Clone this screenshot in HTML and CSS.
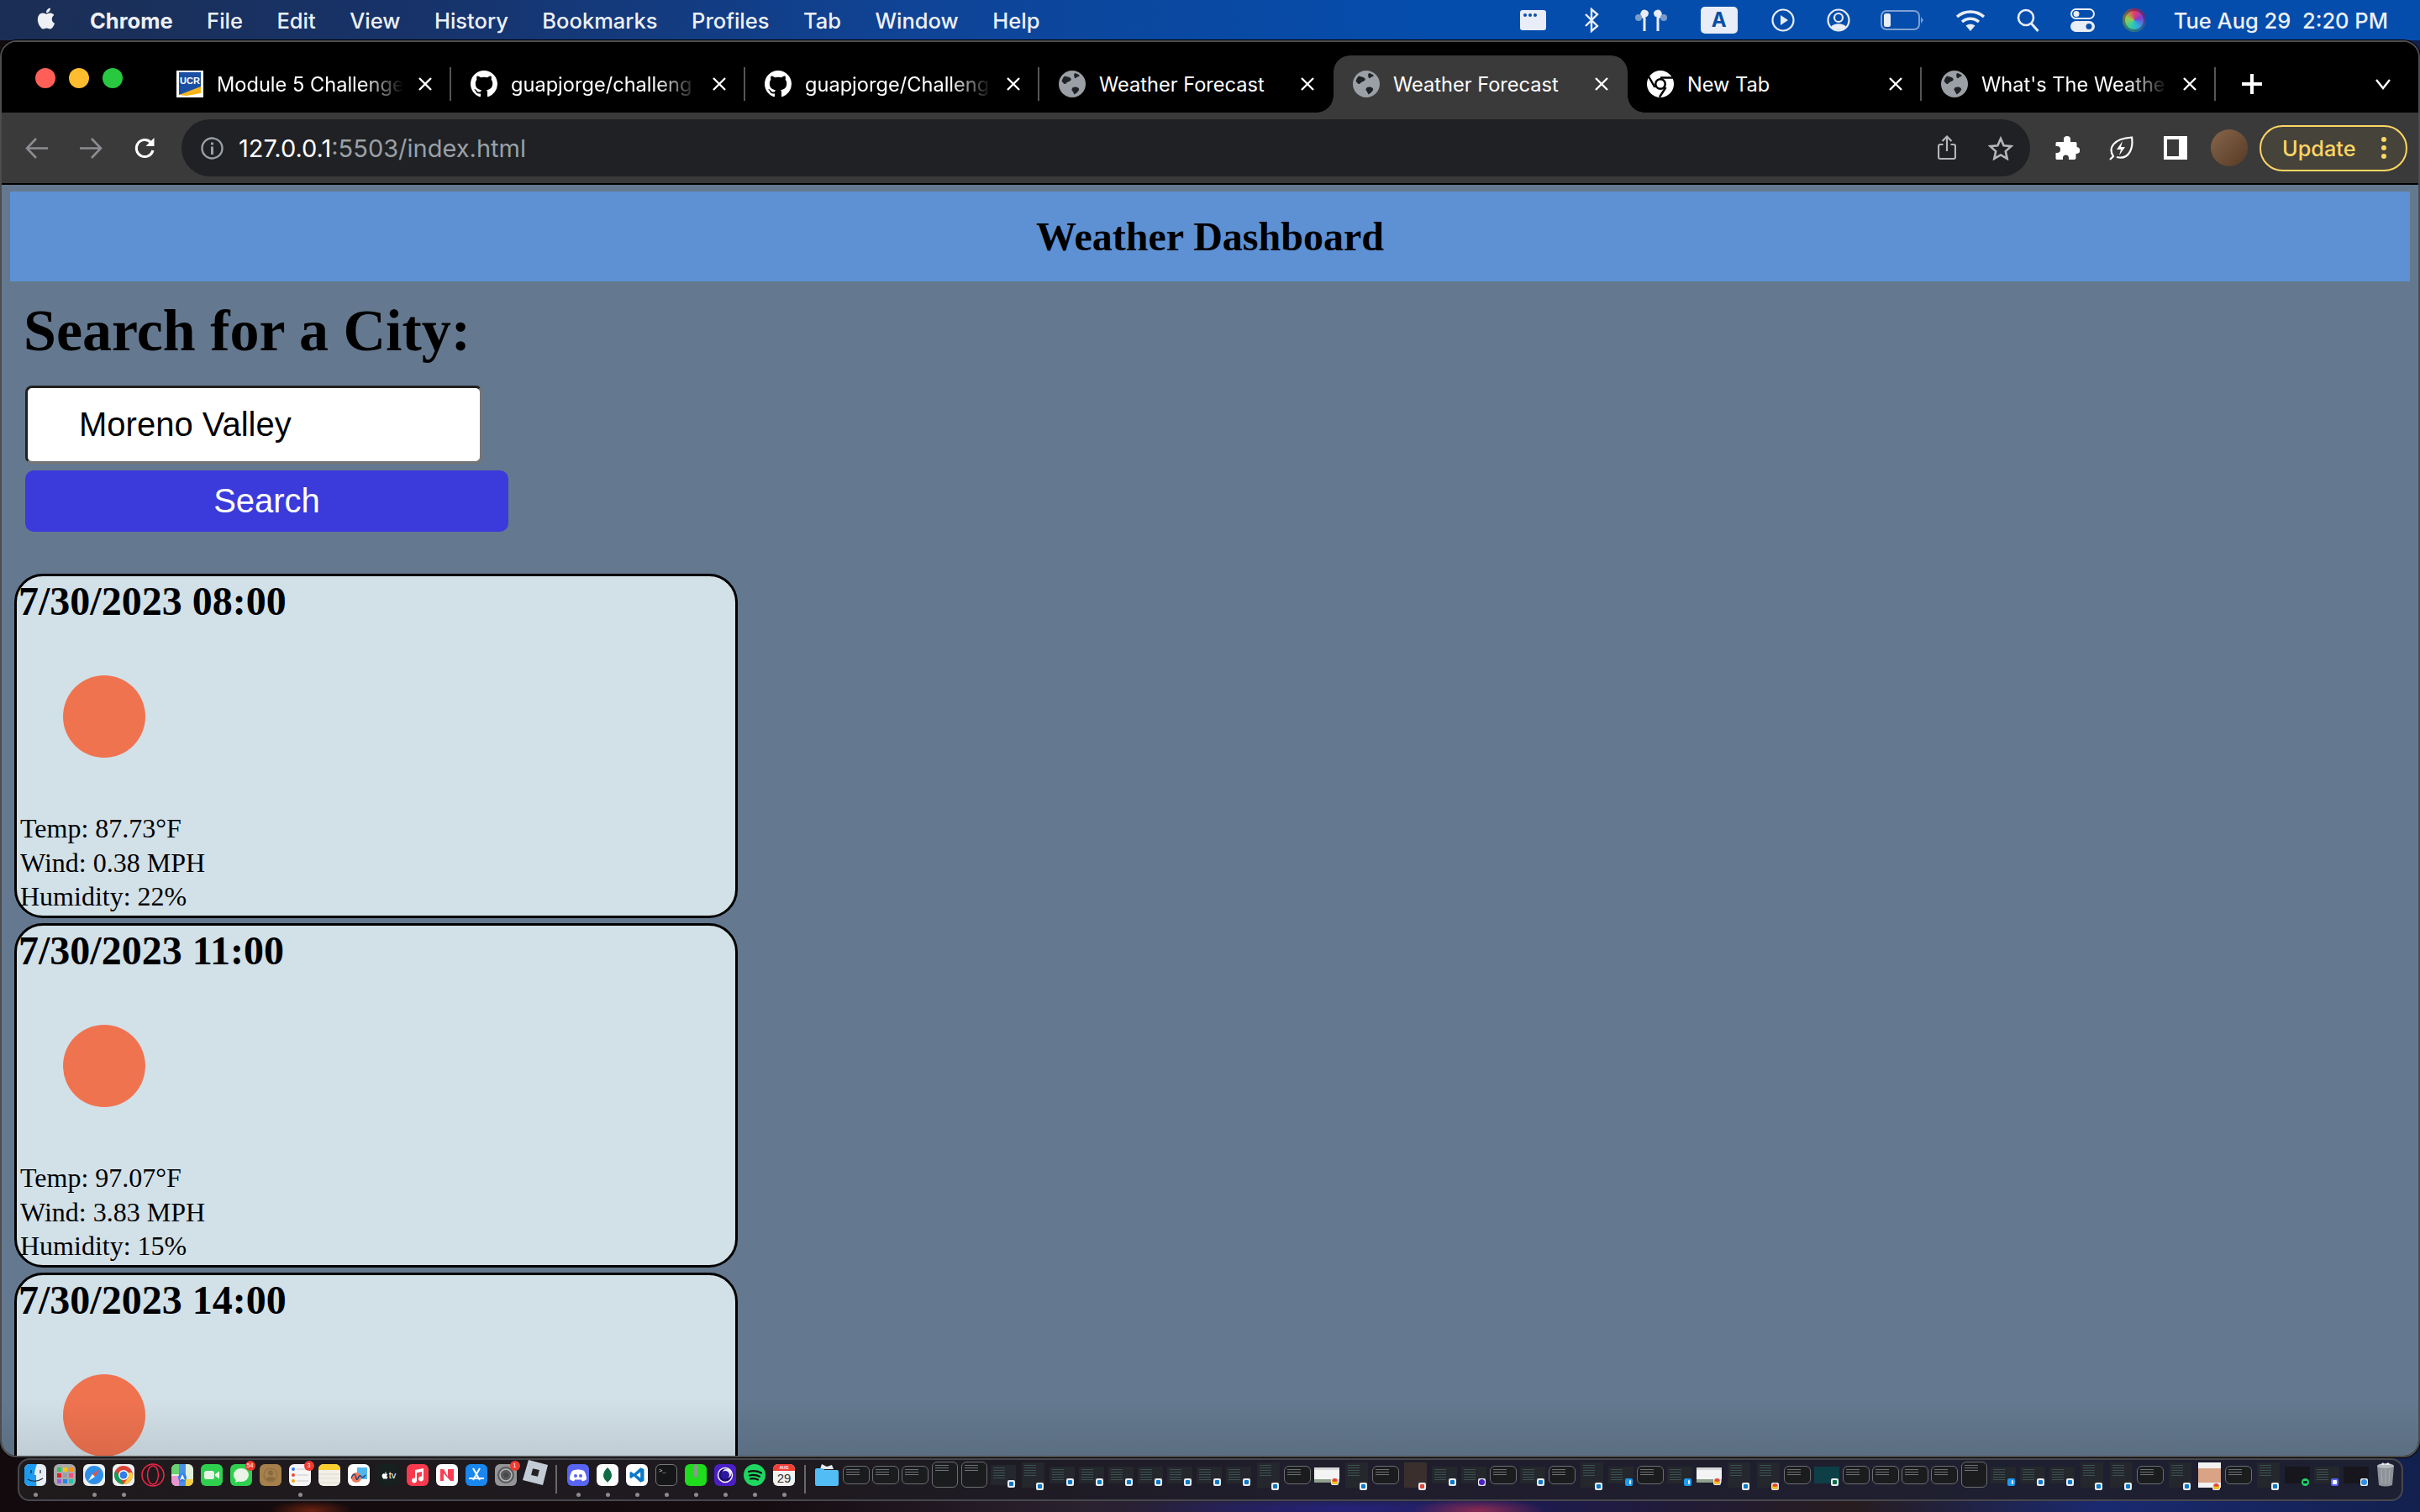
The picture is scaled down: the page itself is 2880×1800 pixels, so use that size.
FILE: index.html
```html
<!DOCTYPE html>
<html lang="en">
<head>
<meta charset="utf-8">
<title>Weather Dashboard</title>
<link rel="stylesheet" href="styles.css">
</head>
<body>
<svg class="defs" width="0" height="0" aria-hidden="true">
  <defs>
    <symbol id="gh" viewBox="0 0 16 16"><path fill="#fff" d="M8 0C3.58 0 0 3.58 0 8c0 3.54 2.29 6.53 5.47 7.59.4.07.55-.17.55-.38 0-.19-.01-.82-.01-1.49-2.01.37-2.53-.49-2.69-.94-.09-.23-.48-.94-.82-1.13-.28-.15-.68-.52-.01-.53.63-.01 1.08.58 1.23.82.72 1.21 1.87.87 2.33.66.07-.52.28-.87.51-1.07-1.78-.2-3.64-.89-3.64-3.95 0-.87.31-1.59.82-2.15-.08-.2-.36-1.02.08-2.12 0 0 .67-.21 2.2.82.64-.18 1.32-.27 2-.27.68 0 1.36.09 2 .27 1.53-1.04 2.2-.82 2.2-.82.44 1.1.16 1.92.08 2.12.51.56.82 1.27.82 2.15 0 3.07-1.87 3.75-3.65 3.95.29.25.54.73.54 1.48 0 1.07-.01 1.93-.01 2.2 0 .21.15.46.55.38A8.013 8.013 0 0016 8c0-4.42-3.58-8-8-8z"/></symbol>
    <symbol id="globe" viewBox="0 0 32 32"><circle cx="16" cy="16" r="16" fill="#9aa0a6"/><path fill="#202124" d="M7 6.500c2.500 1 5 .5 7 2.500s-.5 3.500-3 4.500-2 3-4 2.500-2.500-3-3.500-3.500C4 10.500 5.500 8 7 6.500zM19 3c2.500.5 4.500 1.700 6 3-1 1.500-3 1-4 2.500s-2 .5-2.500-1-.5-3 .5-4.500zM17 20c2-1 4.500-.5 6 .5s1.500 2 .5 3.500-3 3.500-5 4.500c-1-2-1.500-3.500-2.500-4.500s-.5-3 1-4z"/></symbol>
    <symbol id="x" viewBox="0 0 18 18"><path stroke="#fff" stroke-width="2.400" d="M2 2l14 14M16 2L2 16"/></symbol>
    <symbol id="vs" viewBox="0 0 24 24"><path fill="#0a78c9" d="M17 1.500 7.600 10.300 3.600 7.200 1.800 8.100v7.800l1.800.9 4-3.100 9.400 8.800 5.200-2.100V3.600zM17 7.700v8.600l-5.700-4.300z"/></symbol>
  </defs>
</svg>

<header class="menubar">
  <svg class="apple" viewBox="0 0 24 24"><path fill="#eef0f6" d="M18.710 19.500c-.83 1.240-1.710 2.450-3.050 2.470-1.340.03-1.770-.79-3.290-.79-1.530 0-2 .77-3.270.82-1.310.05-2.300-1.320-3.140-2.530C4.250 17 2.940 12.450 4.700 9.390c.87-1.520 2.430-2.480 4.120-2.510 1.280-.02 2.500.87 3.290.87.78 0 2.260-1.070 3.810-.91.65.03 2.470.26 3.640 1.980-.09.06-2.170 1.280-2.150 3.810.03 3.020 2.650 4.030 2.680 4.040-.03.07-.42 1.440-1.380 2.830M13 3.500c.73-.83 1.940-1.460 2.940-1.500.13 1.170-.34 2.350-1.040 3.190-.69.85-1.830 1.510-2.950 1.420-.15-1.150.41-2.350 1.050-3.110z"/></svg>
  <nav class="menus">
    <span class="menu-app">Chrome</span><span>File</span><span>Edit</span><span>View</span><span>History</span><span>Bookmarks</span><span>Profiles</span><span>Tab</span><span>Window</span><span>Help</span>
  </nav>
  <div class="status">
    <svg class="st-win" viewBox="0 0 31 24"><rect width="31" height="24" rx="3" fill="#e8edf7"/><circle cx="6" cy="6" r="2" fill="#0b4ea6"/><circle cx="12" cy="6" r="2" fill="#0b4ea6"/><circle cx="18" cy="6" r="2" fill="#0b4ea6"/></svg>
    <svg class="st-bt m46" viewBox="0 0 17 30"><path fill="none" stroke="#e8edf7" stroke-width="2.400" d="M1 8l14 14-7 6V2l7 6L1 22"/></svg>
    <svg class="st-pods m42" viewBox="0 0 40 30"><path fill="#e8edf7" d="M8 5a5 5 0 0 1 9 1c0 3-1.500 5-3 5h-.5v17h-3V13C8 12 6 9 8 5zM32 5a5 5 0 0 0-9 1c0 3 1.500 5 3 5h.5v17h3V13c2.500-1 4.500-4 2.500-8z"/><circle cx="5" cy="12" r="4" fill="#7a9cc9"/><circle cx="35" cy="12" r="4" fill="#7a9cc9"/></svg>
    <span class="st-a m39">A</span>
    <svg class="st-c m40" viewBox="0 0 28 28"><circle cx="14" cy="14" r="12.500" fill="none" stroke="#e8edf7" stroke-width="2.200"/><path fill="#e8edf7" d="M11 8l9 6-9 6z"/></svg>
    <svg class="st-c m38" viewBox="0 0 28 28"><circle cx="14" cy="14" r="12.500" fill="none" stroke="#e8edf7" stroke-width="2.200"/><circle cx="14" cy="11" r="5" fill="none" stroke="#e8edf7" stroke-width="2.200"/><path fill="#e8edf7" d="M5 22c3-5 15-5 18 0-4 5-14 5-18 0z"/></svg>
    <svg class="st-bat m36" viewBox="0 0 51 24"><rect x="1" y="1" width="45" height="22" rx="6" fill="none" stroke="#7da0d2" stroke-width="2"/><rect x="4" y="4" width="8" height="16" rx="2.500" fill="#e8edf7"/><path fill="#7da0d2" d="M48 8l3 4-3 4z"/></svg>
    <svg class="st-wifi m38" viewBox="0 0 36 26"><g fill="none" stroke="#e8edf7" stroke-width="3.400"><path d="M2 9c9-8 23-8 32 0"/><path d="M8 15c6-5 14-5 20 0"/></g><path fill="#e8edf7" d="M12.500 19.500c3-2.500 8-2.500 11 0L18 26z"/></svg>
    <svg class="st-search m37" viewBox="0 0 27 28"><circle cx="11" cy="11" r="9" fill="none" stroke="#e8edf7" stroke-width="2.600"/><path stroke="#e8edf7" stroke-width="3" d="M17.500 18l8 9"/></svg>
    <svg class="st-cc m37" viewBox="0 0 29 28"><rect x="1" y="1" width="27" height="11" rx="5.500" fill="none" stroke="#e8edf7" stroke-width="2"/><circle cx="7" cy="6.500" r="3.500" fill="#e8edf7"/><rect y="15" width="29" height="13" rx="6.500" fill="#e8edf7"/><circle cx="22" cy="21.500" r="3.500" fill="#0b4ea6"/></svg>
    <span class="siri m33"></span>
    <span class="clock m33">Tue Aug 29&nbsp;&nbsp;2:20 PM</span>
  </div>
</header>

<main class="window">
  <div class="tabstrip">
    <div class="lights"><i class="l-red"></i><i class="l-yel"></i><i class="l-grn"></i></div>
    <div class="tab">
      <svg class="fav" viewBox="0 0 32 32"><rect width="32" height="32" fill="#fff"/><path fill="#1a4fa3" d="M3 2h26v21L3 29z"/><path fill="#f4b41a" d="M3 29l26-10v8L12 30z"/><text x="16" y="16" class="ucr">UCR</text></svg>
      <span class="title fade">Module 5 Challenge</span>
      <svg class="close"><use href="#x"/></svg><i class="sep"></i>
    </div>
    <div class="tab">
      <svg class="fav"><use href="#gh"/></svg>
      <span class="title fade">guapjorge/challeng</span>
      <svg class="close"><use href="#x"/></svg><i class="sep"></i>
    </div>
    <div class="tab">
      <svg class="fav"><use href="#gh"/></svg>
      <span class="title fade">guapjorge/Challeng</span>
      <svg class="close"><use href="#x"/></svg><i class="sep"></i>
    </div>
    <div class="tab">
      <svg class="fav"><use href="#globe"/></svg>
      <span class="title">Weather Forecast</span>
      <svg class="close"><use href="#x"/></svg><i class="sep off"></i>
    </div>
    <div class="tab active">
      <svg class="fav"><use href="#globe"/></svg>
      <span class="title">Weather Forecast</span>
      <svg class="close"><use href="#x"/></svg><i class="sep off"></i>
    </div>
    <div class="tab">
      <svg class="fav" viewBox="0 0 32 32"><circle cx="16" cy="16" r="16" fill="#fff"/><circle cx="16" cy="16" r="7" fill="#000"/><circle cx="16" cy="16" r="4.500" fill="#fff"/><path stroke="#000" stroke-width="2.500" d="M16 8.500h15M9.500 20 2 7M22.500 20 15 31.500"/></svg>
      <span class="title">New Tab</span>
      <svg class="close"><use href="#x"/></svg><i class="sep"></i>
    </div>
    <div class="tab">
      <svg class="fav"><use href="#globe"/></svg>
      <span class="title fade">What's The Weathe</span>
      <svg class="close"><use href="#x"/></svg><i class="sep"></i>
    </div>
    <svg class="plus" viewBox="0 0 24 24"><path stroke="#fff" stroke-width="4" d="M12 0v24M0 12h24"/></svg>
    <svg class="chev" viewBox="0 0 20 14"><path fill="none" stroke="#fff" stroke-width="2.400" d="M2 2l8 10 8-10"/></svg>
  </div>

  <div class="toolbar">
    <svg class="nav back" viewBox="0 0 27 27"><path fill="none" stroke="#8b8d90" stroke-width="2.600" d="M27 13.500H3M13 2 2 13.500 13 25"/></svg>
    <svg class="nav fwd" viewBox="0 0 27 27"><path fill="none" stroke="#8b8d90" stroke-width="2.600" d="M0 13.500h24M14 2l11 11.500L14 25"/></svg>
    <svg class="nav reload" viewBox="0 0 27 27"><path fill="none" stroke="#fff" stroke-width="3" d="M23 16a10 10 0 1 1-2.500-9.500"/><path fill="#fff" d="M24.500 1v10h-10z"/></svg>
    <div class="omni">
      <svg class="info" viewBox="0 0 27 27"><circle cx="13.500" cy="13.500" r="12" fill="none" stroke="#9aa0a6" stroke-width="2.400"/><path fill="#9aa0a6" d="M12 11.500h3V21h-3zM12 6.500h3v3h-3z"/></svg>
      <span class="url"><span class="url-host">127.0.0.1</span>:5503/index.html</span>
      <svg class="share" viewBox="0 0 22 30"><path fill="none" stroke="#b4b6b8" stroke-width="2.200" d="M6.500 11H3a2 2 0 0 0-2 2v13a2 2 0 0 0 2 2h16a2 2 0 0 0 2-2V13a2 2 0 0 0-2-2h-3.500M11 19V2M5.500 7 11 1.500 16.500 7"/></svg>
      <svg class="star" viewBox="0 0 30 29"><path fill="none" stroke="#b4b6b8" stroke-width="2.600" d="M15 3l3.600 8.200 8.900.9-6.700 6 1.900 8.800-7.700-4.500-7.700 4.500 1.900-8.800-6.700-6 8.900-.9z"/></svg>
    </div>
    <svg class="puzzle" viewBox="0 0 29 29"><path fill="#fff" d="M10 3.500a4 3.500 0 0 1 8 0V7h6a1.500 1.500 0 0 1 1.500 1.500V13H25a4 3.500 0 0 1 0 8h-.5v5a2 2 0 0 1-2 2H16v-2a3.500 3.500 0 0 0-7 0v2H2a1.500 1.500 0 0 1-1.500-1.500V20H2a4 4 0 0 0 0-8H.5V8.500A1.500 1.500 0 0 1 2 7h8z"/></svg>
    <svg class="leaf" viewBox="0 0 29 29"><path fill="none" stroke="#fff" stroke-width="2.200" d="M1 28l4-4C-1 15 4 3 27 1.500 29 14 24 29 9 25"/><path fill="#fff" d="M16 6l-7 10h5l-2 7 7-10h-5z"/></svg>
    <svg class="panel" viewBox="0 0 28 28"><path fill="#fff" fill-rule="evenodd" d="M0 0h28v28H0zM4 4v20h14V4z"/></svg>
    <span class="avatar"></span>
    <div class="update"><span>Update</span><svg class="dots" viewBox="0 0 6 26"><circle cx="3" cy="3" r="3"/><circle cx="3" cy="13" r="3"/><circle cx="3" cy="23" r="3"/></svg></div>
  </div>

  <div class="page">
    <div class="site-head"><h1 class="site-title">Weather Dashboard</h1></div>
    <section class="search">
      <h2 class="search-title">Search for a City:</h2>
      <input class="city" type="text" value="Moreno Valley">
      <button class="go" type="button">Search</button>
    </section>
    <section class="forecast">
      <article class="card">
        <h3 class="when">7/30/2023 08:00</h3>
        <div class="icon"><span class="sun"></span></div>
        <p>Temp: 87.73°F</p><p>Wind: 0.38 MPH</p><p>Humidity: 22%</p>
      </article>
      <article class="card">
        <h3 class="when">7/30/2023 11:00</h3>
        <div class="icon"><span class="sun"></span></div>
        <p>Temp: 97.07°F</p><p>Wind: 3.83 MPH</p><p>Humidity: 15%</p>
      </article>
      <article class="card">
        <h3 class="when">7/30/2023 14:00</h3>
        <div class="icon"><span class="sun"></span></div>
      </article>
    </section>
  </div>
</main>

<footer class="dock">
  <div class="slot"><svg class="app" viewBox="0 0 26 26"><rect width="26" height="26" rx="6" fill="#e6edf5"/><path fill="#1d9bf0" d="M6 0h9c-2 5-3 9-3 13h2c0 3 0 8 .5 13H6a6 6 0 0 1-6-6V6a6 6 0 0 1 6-6z"/><path fill="none" stroke="#1b2a3a" stroke-width="1.200" d="M4 18c5 3 12 3 18-1M8 7v4M19 7v4"/></svg><i class="dot"></i></div>
  <div class="slot"><svg class="app" viewBox="0 0 26 26"><rect width="26" height="26" rx="6" fill="#a9a9ab"/><g><rect x="4" y="4" width="5" height="5" fill="#35c05a"/><rect x="11" y="4" width="5" height="5" fill="#f5c518"/><rect x="18" y="4" width="5" height="5" fill="#ff9500"/><rect x="4" y="11" width="5" height="5" fill="#e0202f"/><rect x="11" y="11" width="5" height="5" fill="#9a9da3"/><rect x="18" y="11" width="5" height="5" fill="#ff4f79"/><rect x="4" y="18" width="5" height="5" fill="#9b5de5"/><rect x="11" y="18" width="5" height="5" fill="#1e88f0"/><rect x="18" y="18" width="5" height="5" fill="#22c7a9"/></g></svg></div>
  <div class="slot"><svg class="app" viewBox="0 0 26 26"><rect width="26" height="26" rx="6" fill="#eef1f4"/><circle cx="13" cy="13" r="11" fill="#2f8fe8"/><path fill="#ef4f3c" d="M20 6l-9 6 3 3z"/><path fill="#fff" d="M6 20l8-5-3-3z"/></svg><i class="dot"></i></div>
  <div class="slot"><svg class="app" viewBox="0 0 26 26"><rect width="26" height="26" rx="6" fill="#eef1f4"/><circle cx="13" cy="13" r="11" fill="#db4437"/><path fill="#0f9d58" d="M13 24A11 11 0 0 1 3.500 7.500L9 17z"/><path fill="#ffcd40" d="M24 13a11 11 0 0 1-11 11l5.500-8-.5-6h5z"/><circle cx="13" cy="13" r="6" fill="#fff"/><circle cx="13" cy="13" r="4.500" fill="#2f7fe8"/></svg><i class="dot"></i></div>
  <div class="slot"><svg class="app wide" viewBox="0 0 28 28"><g fill="none" stroke="#f0264a" stroke-width="1.500"><circle cx="14" cy="14" r="13"/><ellipse cx="14" cy="14" rx="6.500" ry="11"/></g></svg></div>
  <div class="slot"><svg class="app" viewBox="0 0 26 26"><rect width="26" height="26" rx="6" fill="#dff0d8"/><path fill="#67d26f" d="M0 6a6 6 0 0 1 6-6h3v12H0z"/><path fill="#e896d0" d="M0 14h9v12H6a6 6 0 0 1-6-6z"/><path fill="#f5cf45" d="M17 18h9v2a6 6 0 0 1-6 6h-3z"/><rect x="9" y="0" width="8" height="26" fill="#4a90e8"/><circle cx="13" cy="16" r="5" fill="#2f7fe8"/><path fill="#fff" d="M13 12l3 7-3-1.500L10 19z"/></svg></div>
  <div class="slot"><svg class="app" viewBox="0 0 26 26"><rect width="26" height="26" rx="6" fill="#2fd04f"/><rect x="4" y="8" width="12" height="10" rx="2.500" fill="#e8f5e6"/><path fill="#e8f5e6" d="M17 12l5-3.500v9L17 14z"/></svg></div>
  <div class="slot"><svg class="app" viewBox="0 0 26 26"><rect width="26" height="26" rx="6" fill="#2fcf50"/><ellipse cx="13" cy="13" rx="9" ry="8" fill="#e8f5e6"/><path fill="#e8f5e6" d="M7 18l-1 4 5-2z"/></svg><span class="pip">54</span></div>
  <div class="slot"><svg class="app" viewBox="0 0 26 26"><rect width="26" height="26" rx="6" fill="#a57f4c"/><circle cx="13" cy="13" r="8" fill="none" stroke="#8a6a3e" stroke-width="1"/><circle cx="13" cy="10.500" r="3" fill="#8a6a3e"/><path fill="#8a6a3e" d="M7 18c2-4 10-4 12 0-3 2.500-9 2.500-12 0z"/></svg></div>
  <div class="slot"><svg class="app" viewBox="0 0 26 26"><rect width="26" height="26" rx="6" fill="#f5f5f5"/><circle cx="5" cy="6" r="2" fill="#3478f6"/><circle cx="5" cy="13" r="2" fill="#f0483e"/><circle cx="5" cy="20" r="2" fill="#f5a11c"/><path stroke="#c8c8c8" stroke-width="1" d="M9 6h14M9 13h14M9 20h14"/></svg><span class="pip">3</span><i class="dot"></i></div>
  <div class="slot"><svg class="app" viewBox="0 0 26 26"><rect width="26" height="26" rx="6" fill="#f1efe6"/><path fill="#fdd02f" d="M0 6a6 6 0 0 1 6-6h14a6 6 0 0 1 6 6v1H0z"/><path stroke="#d8d6cd" stroke-width=".7" d="M0 12h26M0 17h26M0 22h26"/></svg></div>
  <div class="slot"><svg class="app" viewBox="0 0 26 26"><rect width="26" height="26" rx="6" fill="#fff"/><rect x="11" y="4" width="12" height="14" fill="#52b6ee"/><circle cx="10" cy="16" r="6" fill="#f0785a"/><path fill="none" stroke="#16477f" stroke-width="1.300" d="M4 17c3-8 5-5 6 0s3-5 5-3 3 3 6-1"/></svg></div>
  <div class="slot"><div class="app tv"><svg viewBox="0 0 24 24"><path fill="#fff" d="M18.710 19.500c-.83 1.240-1.710 2.450-3.050 2.470-1.340.03-1.770-.79-3.290-.79-1.530 0-2 .77-3.270.82-1.310.05-2.300-1.320-3.140-2.530C4.250 17 2.940 12.450 4.700 9.390c.87-1.520 2.430-2.480 4.120-2.510 1.280-.02 2.500.87 3.290.87.78 0 2.260-1.070 3.810-.91.65.03 2.470.26 3.640 1.980-.09.06-2.170 1.280-2.150 3.810.03 3.020 2.650 4.030 2.680 4.040-.03.07-.42 1.440-1.380 2.830M13 3.500c.73-.83 1.940-1.460 2.940-1.500.13 1.170-.34 2.350-1.040 3.190-.69.85-1.830 1.510-2.950 1.420-.15-1.150.41-2.350 1.050-3.110z"/></svg>tv</div></div>
  <div class="slot"><svg class="app" viewBox="0 0 26 26"><rect width="26" height="26" rx="6" fill="#f93a4e"/><path fill="#fff" d="M10 7l10-2v12.500a3 3 0 1 1-2-2.800V9l-6 1.200v9.300a3 3 0 1 1-2-2.800z"/></svg></div>
  <div class="slot"><svg class="app" viewBox="0 0 26 26"><rect width="26" height="26" rx="6" fill="#fff"/><path fill="#fa3e54" d="M5 6h4l5 9V6h7v14h-4L9 11v9H5z"/></svg></div>
  <div class="slot"><svg class="app" viewBox="0 0 26 26"><rect width="26" height="26" rx="6" fill="#1a87ee"/><path fill="none" stroke="#fff" stroke-width="2" d="M9 5l8 14M17 5 9 19M4 17h18"/></svg></div>
  <div class="slot"><svg class="app" viewBox="0 0 26 26"><rect width="26" height="26" rx="6" fill="#949596"/><circle cx="13" cy="13" r="10" fill="#5a5b5c"/><circle cx="13" cy="13" r="7" fill="none" stroke="#b8b9ba" stroke-width="1.600"/><circle cx="13" cy="13" r="3" fill="#48494a"/></svg><span class="pip">1</span></div>
  <div class="slot"><svg class="app roblox" viewBox="0 0 30 30"><path fill="#c3ccd6" d="M7 0l23 6-6 24L0 24z"/><rect x="11" y="11" width="8" height="8" fill="#222" transform="rotate(14 15 15)"/></svg></div>
  <i class="dock-sep"></i>
  <div class="slot"><svg class="app" viewBox="0 0 26 26"><rect width="26" height="26" rx="6" fill="#5865f2"/><path fill="#fff" d="M6 8c4-2 10-2 14 0 2 3 3 6 3 10-2 1.500-3.500 2-5 2.500l-1-2h-8l-1 2c-1.500-.5-3-1-5-2.500 0-4 1-7 3-10z"/><circle cx="10" cy="14" r="2" fill="#5865f2"/><circle cx="16" cy="14" r="2" fill="#5865f2"/></svg><i class="dot"></i></div>
  <div class="slot"><svg class="app" viewBox="0 0 26 26"><rect width="26" height="26" rx="6" fill="#fff"/><path fill="#0f6b46" d="M13 4c3 3 5 6 5 9.500S15 20 13.500 21l-.5 2-.5-2C11 20 8 17 8 13.500S10 7 13 4z"/></svg><i class="dot"></i></div>
  <div class="slot"><div class="app vsapp"><svg><use href="#vs"/></svg></div><i class="dot"></i></div>
  <div class="slot"><div class="app term">&gt;_</div><i class="dot"></i></div>
  <div class="slot"><svg class="app" viewBox="0 0 26 26"><rect width="26" height="26" rx="6" fill="#1fdc1f"/><rect x="11" y="0" width="4" height="16" rx="2" fill="#8a9a8a"/></svg><i class="dot"></i></div>
  <div class="slot"><svg class="app" viewBox="0 0 26 26"><rect width="26" height="26" rx="6" fill="#4a1fc4"/><circle cx="13" cy="13" r="8.500" fill="#1c0b72" stroke="#fff" stroke-width="1.400"/><circle cx="15" cy="11" r="5.500" fill="#fff" opacity=".9"/><circle cx="13" cy="13" r="5" fill="#2c18a0"/></svg><i class="dot"></i></div>
  <div class="slot"><svg class="app" viewBox="0 0 26 26"><circle cx="13" cy="13" r="13" fill="#1ed760"/><path fill="none" stroke="#111" stroke-width="2.200" stroke-linecap="round" d="M6 9c5-1.500 10-1 15 1.500M7 13.500c4-1 8-.8 12 1.200M8 17.500c3-.7 6-.5 9 1"/></svg><i class="dot"></i></div>
  <div class="slot"><div class="app cal"><span class="cal-m">AUG</span><span class="cal-d">29</span></div><i class="dot"></i></div>
  <i class="dock-sep"></i>
  <div class="slot"><svg class="app folder" viewBox="0 0 28 26"><path fill="#e4ecf3" d="M8 0l6 3 6-2 2 5H6z"/><path fill="#52bdf4" d="M0 7q0-2 2-2h7l2 2h15q2 0 2 2v15q0 2-2 2H2q-2 0-2-2z"/></svg></div>
  <div class="slot"><i class="th term"></i></div>
  <div class="slot"><i class="th term"></i></div>
  <div class="slot"><i class="th term"></i></div>
  <div class="slot"><i class="th term tall"></i></div>
  <div class="slot"><i class="th term tall"></i></div>
  <div class="slot"><i class="th mid"><span class="bdg vs"></span></i></div>
  <div class="slot"><i class="th tall"><span class="bdg vs"></span></i></div>
  <div class="slot"><i class="th"><span class="bdg vs"></span></i></div>
  <div class="slot"><i class="th"><span class="bdg vs"></span></i></div>
  <div class="slot"><i class="th"><span class="bdg vs"></span></i></div>
  <div class="slot"><i class="th"><span class="bdg vs"></span></i></div>
  <div class="slot"><i class="th"><span class="bdg vs"></span></i></div>
  <div class="slot"><i class="th"><span class="bdg vs"></span></i></div>
  <div class="slot"><i class="th"><span class="bdg vs"></span></i></div>
  <div class="slot"><i class="th tall"><span class="bdg vs"></span></i></div>
  <div class="slot"><i class="th term"></i></div>
  <div class="slot"><i class="th white"><span class="bdg ch"></span></i></div>
  <div class="slot"><i class="th tall"><span class="bdg vs"></span></i></div>
  <div class="slot"><i class="th term"></i></div>
  <div class="slot"><i class="th tall brown"><span class="bdg cl"></span></i></div>
  <div class="slot"><i class="th"><span class="bdg vs"></span></i></div>
  <div class="slot"><i class="th"><span class="bdg pu"></span></i></div>
  <div class="slot"><i class="th term"></i></div>
  <div class="slot"><i class="th"><span class="bdg vs"></span></i></div>
  <div class="slot"><i class="th term"></i></div>
  <div class="slot"><i class="th tall"><span class="bdg vs"></span></i></div>
  <div class="slot"><i class="th"><span class="bdg fi"></span></i></div>
  <div class="slot"><i class="th term"></i></div>
  <div class="slot"><i class="th"><span class="bdg fi"></span></i></div>
  <div class="slot"><i class="th white"><span class="bdg ch"></span></i></div>
  <div class="slot"><i class="th tall"><span class="bdg vs"></span></i></div>
  <div class="slot"><i class="th tall"><span class="bdg ch"></span></i></div>
  <div class="slot"><i class="th term"></i></div>
  <div class="slot"><i class="th teal"><span class="bdg mo"></span></i></div>
  <div class="slot"><i class="th term"></i></div>
  <div class="slot"><i class="th term"></i></div>
  <div class="slot"><i class="th term"></i></div>
  <div class="slot"><i class="th term"></i></div>
  <div class="slot"><i class="th term tall"></i></div>
  <div class="slot"><i class="th"><span class="bdg fi"></span></i></div>
  <div class="slot"><i class="th"><span class="bdg vs"></span></i></div>
  <div class="slot"><i class="th"><span class="bdg vs"></span></i></div>
  <div class="slot"><i class="th tall"><span class="bdg vs"></span></i></div>
  <div class="slot"><i class="th tall"><span class="bdg vs"></span></i></div>
  <div class="slot"><i class="th term"></i></div>
  <div class="slot"><i class="th tall"><span class="bdg vs"></span></i></div>
  <div class="slot"><i class="th tall photo"><span class="bdg ch"></span></i></div>
  <div class="slot"><i class="th term"></i></div>
  <div class="slot"><i class="th tall"><span class="bdg vs"></span></i></div>
  <div class="slot"><i class="th dark"><span class="bdg sp"></span></i></div>
  <div class="slot"><i class="th"><span class="bdg di"></span></i></div>
  <div class="slot"><i class="th dark"><span class="bdg sa"></span></i></div>
  <div class="slot"><svg class="trash" viewBox="0 0 22 30"><path fill="#8d9198" d="M1 5h20l-2 23q-8 3-16 0z"/><ellipse cx="11" cy="5" rx="10" ry="3" fill="#b5b8bd"/><path fill="#e8e9ec" d="M5 4l3-3 2 3 4-3 3 3z"/><path stroke="#a9acb2" stroke-width="1" d="M6 9l1 17M11 9v18M16 9l-1 17"/></svg></div>
</footer>
</body>
</html>
```

FILE: styles.css
```css
* { box-sizing: border-box; }

html, body { margin: 0; height: 1800px; overflow: hidden; }

body {
  width: 2880px;
  font-family: "Liberation Serif", "Times New Roman", serif;
  color: #000;
  background:
    radial-gradient(50px 12px at 370px 1798px, #6a2210 0, transparent 100%),
    radial-gradient(80px 14px at 1760px 1798px, #8a2a50 0, transparent 100%),
    radial-gradient(260px 16px at 1600px 1796px, #25237a 0, transparent 100%),
    linear-gradient(90deg, #120a0c 0, #150c10 900px, #2a2230 1300px, #1c1a50 1800px, #271c1e 2200px, #1a2a70 2500px, #12204e 2880px);
}

.defs { position: absolute; }

/* macOS menu bar */
.menubar {
  height: 48px;
  display: flex;
  align-items: center;
  padding: 0 38px 0 40px;
  background: linear-gradient(90deg, #1b2e54 0, #17336a 500px, #0f4497 1100px, #054dac 1700px);
  color: #edf0f7;
  font: 500 25.500px "Inter", "Noto Sans", sans-serif;
}
.apple { width: 30px; height: 34px; margin-top: -4px; }
.menus { display: flex; gap: 40.500px; margin-left: 37px; }
.menu-app { font-weight: 700; }
.status { display: flex; align-items: center; margin-left: auto; }
.st-win { width: 31px; height: 24px; }
.st-bt { width: 17px; height: 30px; }
.st-pods { width: 40px; height: 30px; }
.st-a {
  width: 44px; height: 32px; border-radius: 5px;
  background: #e8edf7; color: #0b4ea6;
  font: 700 24px/32px "Inter", sans-serif; text-align: center;
}
.st-c { width: 28px; height: 28px; }
.st-bat { width: 51px; height: 24px; }
.st-wifi { width: 36px; height: 26px; }
.st-search { width: 27px; height: 28px; }
.st-cc { width: 29px; height: 28px; }
.siri {
  width: 28px; height: 28px; border-radius: 50%;
  background: conic-gradient(#e63a6a, #7b3fd0, #2fa8e0, #38d0a0, #9ec84a, #e63a6a);
  box-shadow: inset 0 0 0 3px rgba(40, 20, 60, .45);
}
.m33 { margin-left: 33px; }
.m36 { margin-left: 36px; }
.m37 { margin-left: 37px; }
.m38 { margin-left: 38px; }
.m39 { margin-left: 39px; }
.m40 { margin-left: 40px; }
.m42 { margin-left: 42px; }
.m46 { margin-left: 46px; }

/* Browser window */
.window {
  height: 1687px;
  border: 2px solid #4d4d4f;
  border-radius: 20px;
  overflow: hidden;
  background: #000;
  box-shadow: 0 0 0 1px #000;
}

.tabstrip {
  height: 84px;
  display: flex;
  align-items: flex-end;
  background: #000;
}
.lights { display: flex; gap: 16px; width: 185px; padding-left: 40px; align-self: flex-start; padding-top: 31px; }
.lights i { width: 24px; height: 24px; border-radius: 50%; }
.l-red { background: #ff5f57; }
.l-yel { background: #febc2e; }
.l-grn { background: #28c840; }

.tab {
  position: relative;
  flex: none;
  width: 350px;
  height: 68px;
  display: flex;
  align-items: center;
  padding-left: 23px;
  color: #fff;
  font: 400 23.600px "Inter", "Noto Sans", sans-serif;
}
.tab.active { background: #3a3a3a; border-radius: 20px 20px 0 0; }
.tab.active::before, .tab.active::after {
  content: "";
  position: absolute;
  bottom: 0;
  width: 20px;
  height: 20px;
}
.tab.active::before { left: -20px; background: radial-gradient(circle at 0 0, #000 19.500px, #3a3a3a 20px); }
.tab.active::after { right: -20px; background: radial-gradient(circle at 100% 0, #000 19.500px, #3a3a3a 20px); }
.fav { flex: none; width: 32px; height: 32px; }
.ucr { font: 700 11px "Liberation Sans", sans-serif; fill: #fff; text-anchor: middle; }
.title { flex: none; width: 222px; margin-left: 16px; white-space: nowrap; }
.fade { -webkit-mask-image: linear-gradient(90deg, #000 78%, transparent); mask-image: linear-gradient(90deg, #000 78%, transparent); }
.close { flex: none; width: 18px; height: 18px; margin-left: 17px; }
.sep { flex: none; width: 2px; height: 40px; margin-left: 20px; background: #555; }
.sep.off { background: transparent; }
.plus { flex: none; width: 24px; height: 24px; margin: 0 0 22px 31px; }
.chev { flex: none; width: 20px; height: 14px; margin: 0 32px 27px auto; }

.toolbar {
  height: 84px;
  display: flex;
  align-items: center;
  background: #3a3a3a;
  padding-left: 28px;
}
.nav { flex: none; width: 27px; height: 27px; }
.fwd { margin-left: 38px; }
.reload { margin-left: 37px; }
.omni {
  flex: none;
  width: 2200px;
  height: 68px;
  margin-left: 30px;
  display: flex;
  align-items: center;
  padding-left: 23px;
  border-radius: 34px;
  background: #202124;
  color: #9aa0a6;
  font: 400 29px "Inter", "Noto Sans", sans-serif;
}
.info { flex: none; width: 27px; height: 27px; }
.url { margin-left: 18px; }
.url-host { color: #fff; }
.share { flex: none; width: 22px; height: 30px; margin-left: auto; }
.star { flex: none; width: 30px; height: 29px; margin: 0 20px 0 38px; }
.puzzle, .leaf, .panel { flex: none; width: 29px; height: 29px; }
.puzzle { margin-left: 30px; }
.leaf { margin-left: 35px; }
.panel { margin-left: 36px; width: 28px; height: 28px; }
.avatar {
  flex: none; width: 44px; height: 44px; margin-left: 28px; border-radius: 50%;
  background: linear-gradient(135deg, #87654a, #553a26);
}
.update {
  flex: none;
  width: 176px;
  height: 55px;
  margin-left: 14px;
  display: flex;
  align-items: center;
  padding-left: 25px;
  border: 2px solid #fdd663;
  border-radius: 28px;
  background: #46433b;
  color: #fdd663;
  font: 500 25.300px "Inter", "Noto Sans", sans-serif;
}
.dots { width: 6px; height: 26px; margin-left: 30px; fill: #fdd663; }

/* The page shown in the browser */
.page {
  position: relative;
  height: 1515px;
  margin-top: 2px;
  padding: 8px 10px 0;
  overflow: hidden;
  background: #64798f;
}
.page::after {
  content: "";
  position: absolute;
  left: 0; right: 0; bottom: 0;
  height: 70px;
  background: linear-gradient(transparent, rgba(0, 0, 0, .09));
}
.site-head {
  height: 107px;
  display: flex;
  align-items: center;
  justify-content: center;
  background: #5e91d4;
}
.site-title { margin: 0; font-size: 48px; font-weight: 700; line-height: 1; }

.search { display: flex; flex-direction: column; align-items: flex-start; padding-left: 18px; }
.search-title { margin: 19px 0 25px -2px; font-size: 70px; font-weight: 700; line-height: 80px; }
.city {
  width: 544px;
  height: 93px;
  padding: 0 0 0 61px;
  border: 3px inset #767676;
  border-radius: 8px;
  background: #fff;
  color: #000;
  font: 400 40px "Liberation Sans", Arial, sans-serif;
}
.go {
  width: 575px;
  height: 73px;
  margin-top: 8px;
  border: 0;
  border-radius: 10px;
  background: #3b3adb;
  color: #fff;
  font: 400 40px "Liberation Sans", Arial, sans-serif;
}

.forecast { margin: 50px 0 0 5px; }
.card {
  width: 861px;
  height: 410px;
  margin-bottom: 6px;
  padding: 0 2px 2px 4px;
  border: 3px solid #000;
  border-radius: 34px;
  background: #d2e0e8;
}
.when { margin: 0 0 7px -2px; font-size: 48px; font-weight: 700; line-height: 60px; white-space: nowrap; }
.icon { width: 200px; height: 200px; margin-bottom: 13px; display: flex; align-items: center; justify-content: center; }
.sun { width: 98px; height: 98px; border-radius: 50%; background: #f07350; }
.card p { margin: 0; font-size: 32px; line-height: 40.700px; }

/* macOS Dock */
.dock {
  width: 2839px;
  height: 51px;
  margin: 1px 0 0 21px;
  padding: 5px 0 0 1.500px;
  display: flex;
  align-items: flex-start;
  border: 2px solid #47474d;
  border-radius: 14px;
  background: linear-gradient(90deg, #1f1a1c, #1e1a20 1000px, #201d2c 1500px, #1d2032 2880px);
}
.slot {
  position: relative;
  flex: none;
  width: 35px;
  height: 40px;
  display: flex;
  flex-direction: column;
  align-items: center;
}
.app { flex: none; display: block; width: 26px; height: 26px; }
.app.wide { width: 28px; height: 28px; margin-top: -1px; }
.roblox { width: 30px; height: 30px; margin-top: -5px; }
.folder { width: 28px; }
.dot { width: 5px; height: 5px; margin-top: 8px; border-radius: 50%; background: #8b8b8e; }
.pip {
  position: absolute;
  top: -4px; right: 1px;
  width: 12px; height: 12px;
  border-radius: 50%;
  background: #f03a30;
  color: #fff;
  font: 400 7px/12px "Liberation Sans", sans-serif;
  text-align: center;
}
.tv {
  display: flex;
  align-items: center;
  justify-content: center;
  border-radius: 6px;
  background: #16201f;
  color: #fff;
  font: 500 11px "Liberation Sans", sans-serif;
}
.tv svg { width: 10px; height: 11px; }
.vsapp { border-radius: 6px; background: #fff; padding: 3px; }
.vsapp svg { display: block; width: 20px; height: 20px; }
.term {
  padding: 3px 0 0 3px;
  border: 1px solid #77787a;
  border-radius: 6px;
  background: #151618;
  color: #e0e0e0;
  font: 400 7px "Liberation Mono", monospace;
}
.cal {
  display: flex;
  flex-direction: column;
  align-items: center;
  overflow: hidden;
  border-radius: 6px;
  background: #f2f2f0;
}
.cal-m { width: 100%; height: 8px; background: #ef3e36; color: #fff; font: 700 5px/8px "Liberation Sans", sans-serif; text-align: center; }
.cal-d { color: #333; font: 400 15px/17px "Liberation Sans", sans-serif; }
.dock-sep { flex: none; width: 2px; height: 34px; margin: 1px 8px 0 6px; background: #68686b; }

.th {
  position: relative;
  flex: none;
  display: block;
  width: 30px;
  height: 20px;
  margin-top: 3px;
  background:
    repeating-linear-gradient(#3d5253 0 1px, transparent 1px 3px) 3px 3px / 14px 14px no-repeat,
    #24272c;
}
.th.mid { height: 24px; margin-top: 1px; }
.th.tall { width: 27px; height: 30px; margin-top: -2px; }
.th.term {
  width: 32px;
  height: 22px;
  margin-top: 2px;
  border: 1px solid #6c6d70;
  background:
    repeating-linear-gradient(#6f7275 0 1px, transparent 1px 3px) 3px 3px / 16px 9px no-repeat,
    #1b1c1e;
}
.th.term.tall { width: 31px; height: 31px; margin-top: -3px; }
.th.white { height: 18px; margin-top: 4px; background: linear-gradient(#d8d8d8 0 3px, #f4f4f4 3px 80%, #8fa08f 80%); }
.th.brown { background: #3a2f2c; }
.th.teal { background: #0f3f46; }
.th.dark { background: #17161c; }
.th.photo { background: linear-gradient(#f2f2f2 0 25%, #d9a385 25% 80%, #f2f2f2 80%); }
.bdg {
  position: absolute;
  right: 1px;
  bottom: -3px;
  width: 9px;
  height: 9px;
  border-radius: 2px;
  background: #e8edf2;
}
.bdg::after { content: ""; position: absolute; inset: 2px; border-radius: 1px; background: #0a78c9; }
.bdg.ch::after { background: #e0483a; inset: 1px; border-radius: 50%; box-shadow: inset 0 -3px #f5c518; }
.bdg.cl::after { background: #e0483a; }
.bdg.pu::after { background: #4a1fc4; inset: 1px; border-radius: 50%; }
.bdg.fi { background: #1d9bf0; }
.bdg.fi::after { background: #e6edf5; inset: 2px 2px 2px 5px; }
.bdg.mo::after { background: #0f6b46; }
.bdg.sp { background: #1ed760; border-radius: 50%; }
.bdg.sp::after { background: #123; inset: 3px 2px; }
.bdg.di { background: #5865f2; }
.bdg.di::after { background: #fff; }
.bdg.sa::after { background: #2f8fe8; inset: 1px; border-radius: 50%; }
.trash { display: block; width: 22px; height: 30px; margin-top: -3px; }
```
